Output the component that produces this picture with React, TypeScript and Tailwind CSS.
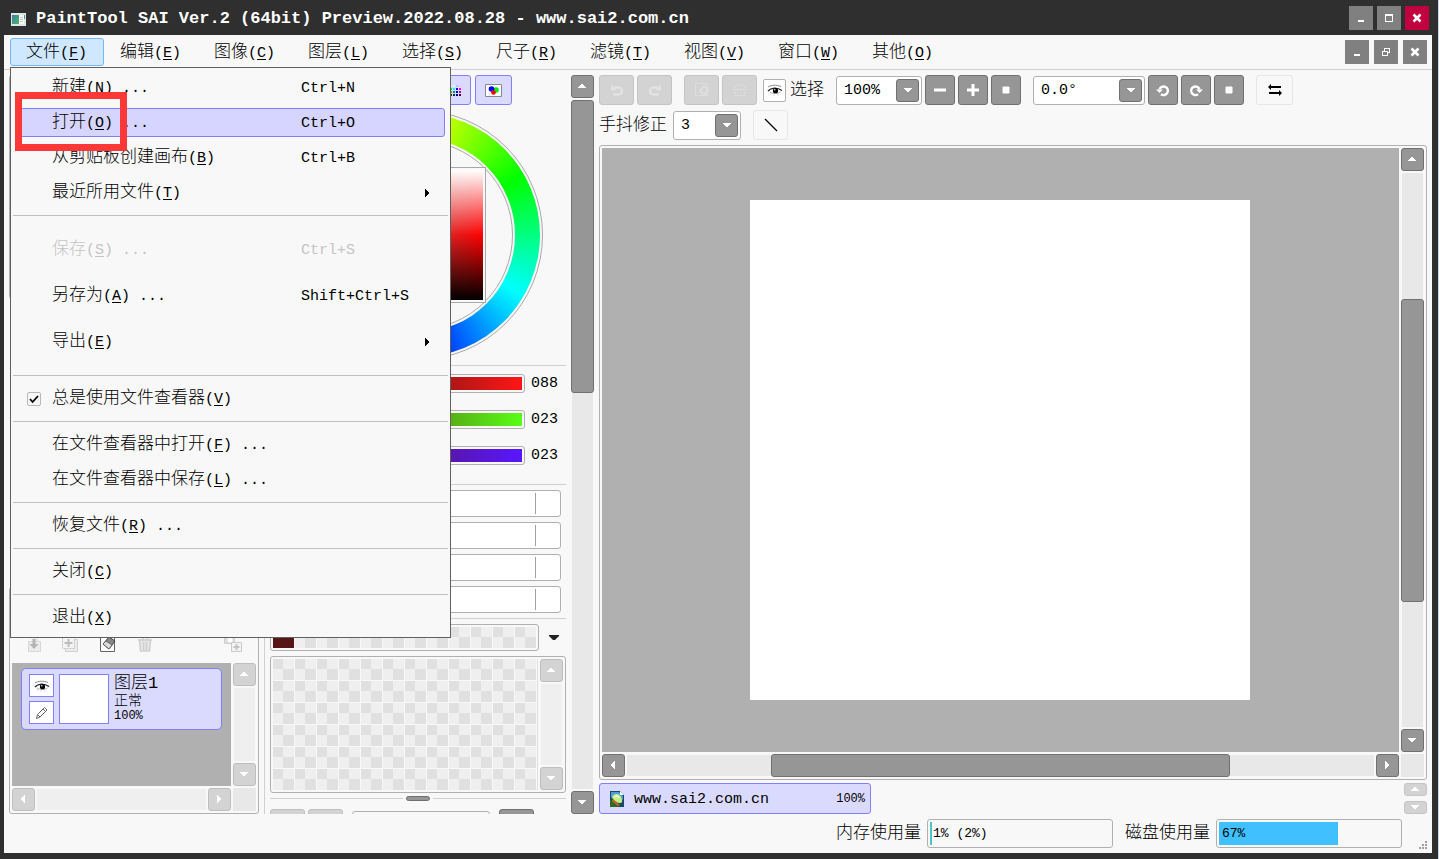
import { clsx } from "clsx";
import type { ReactNode } from "react";

type Dir = "up" | "down" | "left" | "right";

const cjk = "font-['Liberation_Mono','Noto_Sans_CJK_SC',monospace] font-light";

const menus = [
  ["文件", "F"],
  ["编辑", "E"],
  ["图像", "C"],
  ["图层", "L"],
  ["选择", "S"],
  ["尺子", "R"],
  ["滤镜", "T"],
  ["视图", "V"],
  ["窗口", "W"],
  ["其他", "O"],
];

const channels = [
  { name: "R", value: "088", bar: "bg-linear-to-r/srgb from-[#001616] to-[#ff1616]" },
  { name: "G", value: "023", bar: "bg-linear-to-r/srgb from-[#580016] to-[#58ff16]" },
  { name: "B", value: "023", bar: "bg-linear-to-r/srgb from-[#581600] to-[#5816ff]" },
];

const arrowPaths: Record<Dir, string> = {
  up: "M0 6h8v-1h-1v-1h-1v-1h-1v-1h-2v1h-1v1h-1v1h-1z",
  down: "M0 2h8v1h-1v1h-1v1h-1v1h-2v-1h-1v-1h-1v-1h-1z",
  left: "M6 0v8h-1v-1h-1v-1h-1v-1h-1v-2h1v-1h1v-1h1v-1z",
  right: "M2 0v8h1v-1h1v-1h1v-1h1v-2h-1v-1h-1v-1h-1v-1z",
};

function Arrow({ dir, className = "text-white" }: { dir: Dir; className?: string }) {
  return (
    <svg viewBox="0 0 8 8" className={clsx("size-2", className)} fill="currentColor" shapeRendering="crispEdges">
      <path d={arrowPaths[dir]} />
    </svg>
  );
}

// Accelerator label such as 文件(F)
function Label({ text, accel, more }: { text: string; accel?: string; more?: boolean }) {
  return (
    <span className="whitespace-pre text-[17px] leading-5">
      {text}
      {accel && (
        <span className="text-[15px]">
          (<u className="underline-offset-2">{accel}</u>){more && " ..."}
        </span>
      )}
    </span>
  );
}

function ScrollButton({ dir, disabled }: { dir: Dir; disabled?: boolean }) {
  return (
    <button
      aria-label={`Scroll ${dir}`}
      disabled={disabled}
      className={clsx(
        "flex size-[23px] shrink-0 items-center justify-center rounded-[3px] border pr-px pb-px",
        disabled ? "border-[#bebebe] bg-[#d3d3d3]" : "border-[#707070] bg-[#969696]",
      )}
    >
      <Arrow dir={dir} />
    </button>
  );
}

function ScrollBar({
  vertical,
  disabled,
  children,
}: {
  vertical?: boolean;
  disabled?: boolean;
  children?: ReactNode;
}) {
  return (
    <div className={clsx("flex min-h-0 min-w-0 gap-0.5", vertical ? "flex-col items-center" : "items-center")}>
      <ScrollButton dir={vertical ? "up" : "left"} disabled={disabled} />
      <div
        className={clsx(
          "flex min-h-0 flex-1",
          vertical ? "w-[21px] flex-col items-center" : "h-[21px] items-center",
          disabled ? "bg-[#efefef]" : "bg-[#e8e8e8]",
        )}
      >
        {children}
      </div>
      <ScrollButton dir={vertical ? "down" : "right"} disabled={disabled} />
    </div>
  );
}

const thumb = "rounded-[3px] border border-[#707070] bg-[#969696]";

function WinButton({ label, danger, children }: { label: string; danger?: boolean; children: ReactNode }) {
  return (
    <button
      aria-label={label}
      className={clsx("flex size-6 items-center justify-center", danger ? "bg-[#c0003f]" : "bg-[#808080]")}
    >
      <svg viewBox="0 0 24 24" className="size-6" fill="none" stroke="#fff" shapeRendering="crispEdges">
        {children}
      </svg>
    </button>
  );
}

const minimise = <path d="M9 15h6" strokeWidth="2" />;
const close = <path d="M8.5 8.5l7 7M15.5 8.5l-7 7" strokeWidth="2.6" shapeRendering="auto" />;

function TitleBar() {
  return (
    <header className="flex h-[35px] shrink-0 items-center pr-[3px] pl-[7px]">
      <svg viewBox="0 0 15 13" className="mt-1 h-[13px] w-[15px]">
        <defs>
          <linearGradient id="app" x1="0" y1="0" x2="1" y2="1">
            <stop offset="0" stopColor="#3a7fa8" />
            <stop offset="1" stopColor="#4cb860" />
          </linearGradient>
        </defs>
        <path d="M0 0h15v13H0z" fill="#dfe5e6" />
        <path d="M1 2h7v9H1z" fill="url(#app)" />
        <path d="M8 2h5v9H8z" fill="#f8f8f8" />
        <path d="M9 4.5h3M9 6.5h3M9 8.5h3" stroke="#c6c6c6" />
        <path d="M13 2h1v4h-1z" fill="#3a9a90" />
      </svg>
      <h1 className="ml-2.5 flex-1 truncate pt-0.5 text-[17px] leading-5 font-bold text-white">
        PaintTool SAI Ver.2 (64bit) Preview.2022.08.28 - www.sai2.com.cn
      </h1>
      <div className="flex gap-1">
        <WinButton label="Minimise">{minimise}</WinButton>
        <WinButton label="Maximise">
          <path d="M8.5 8.5h7v7h-7z" />
          <path d="M8 9h8" strokeWidth="2" />
        </WinButton>
        <WinButton label="Close" danger>
          {close}
        </WinButton>
      </div>
    </header>
  );
}

interface ItemProps {
  text: string;
  accel: string;
  more?: boolean;
  keys?: string;
  sub?: boolean;
  tall?: boolean;
  active?: boolean;
  disabled?: boolean;
}

function MenuItem({ text, accel, more, keys, sub, tall, active, disabled }: ItemProps) {
  return (
    <button
      role="menuitem"
      disabled={disabled}
      className={clsx(
        "mx-[3px] flex items-center rounded-[3px] border pr-[13px] pl-[35px] text-left",
        tall ? "my-1 h-[38px]" : "my-[3px] h-[29px]",
        active ? "border-[#8080f8] bg-[#d5d5ff]" : "border-transparent",
        disabled && "text-[#c4c4c4]",
      )}
    >
      <span className="w-[249px]">
        <Label text={text} accel={accel} more={more} />
      </span>
      <span className="flex-1 pt-0.5 text-[15px] leading-5">{keys}</span>
      {sub && <Arrow dir="right" className="text-black" />}
    </button>
  );
}

function Separator() {
  return <div role="separator" className="my-[5px] h-px bg-[#c0c0c0]" />;
}

function FileMenu() {
  return (
    <div
      role="menu"
      className="absolute top-8 left-1.5 z-10 flex w-[441px] flex-col border border-[#606060] bg-[#f8f8f8] p-0.5"
    >
      <MenuItem text="新建" accel="N" more keys="Ctrl+N" />
      <MenuItem text="打开" accel="O" more keys="Ctrl+O" active />
      <MenuItem text="从剪贴板创建画布" accel="B" keys="Ctrl+B" />
      <MenuItem text="最近所用文件" accel="T" sub />
      <Separator />
      <div className="flex flex-col pt-1.5 pb-[5px]">
        <MenuItem text="保存" accel="S" more keys="Ctrl+S" tall disabled />
        <MenuItem text="另存为" accel="A" more keys="Shift+Ctrl+S" tall />
        <MenuItem text="导出" accel="E" tall sub />
      </div>
      <Separator />
      <label className="flex h-[35px] items-center pl-3.5">
        <span className="grid size-3.5 place-items-center">
          <input
            type="checkbox"
            defaultChecked
            className="col-start-1 row-start-1 size-3.5 appearance-none rounded-xs border border-[#b8b8b8] bg-[#f8f8f8]"
          />
          <svg viewBox="0 0 10 10" className="col-start-1 row-start-1 size-2.5" fill="none" stroke="#000" strokeWidth="1.8">
            <path d="M1 5l2.6 3L9 2" />
          </svg>
        </span>
        <span className="ml-[11px]">
          <Label text="总是使用文件查看器" accel="V" />
        </span>
      </label>
      <Separator />
      <MenuItem text="在文件查看器中打开" accel="F" more />
      <MenuItem text="在文件查看器中保存" accel="L" more />
      <Separator />
      <MenuItem text="恢复文件" accel="R" more />
      <Separator />
      <MenuItem text="关闭" accel="C" />
      <Separator />
      <MenuItem text="退出" accel="X" />
      <div className="absolute top-6 left-1 h-[59px] w-28 border-7 border-[#fb3838]" />
    </div>
  );
}

function MenuBar() {
  return (
    <nav className="relative flex h-[35px] shrink-0 items-center justify-between border-b border-[#d0d0d0] pr-[5px] pl-1.5">
      <div className="flex">
        {menus.map(([text, accel], i) => (
          <button
            key={accel + text}
            className={clsx(
              "h-7 w-[94px] rounded-[3px] border pt-0.5 pl-[15px] text-left",
              i === 0 ? "border-[#70b8f8] bg-[#d0e8ff]" : "border-transparent",
            )}
          >
            <Label text={text} accel={accel} />
          </button>
        ))}
      </div>
      <div className="flex gap-[5px]">
        <WinButton label="Minimise document">{minimise}</WinButton>
        <WinButton label="Restore document">
          <path d="M8.5 11.5h5v4h-5zM10.5 11v-2.5h5v4h-2" />
          <path d="M8 11.5h6M10 8.5h6" strokeWidth="1.5" />
        </WinButton>
        <WinButton label="Close document">{close}</WinButton>
      </div>
      <FileMenu />
    </nav>
  );
}

function Eye() {
  return (
    <svg viewBox="0 0 16 14" className="h-3.5 w-4" fill="none" stroke="#444">
      <path d="M1 4C4 2 9 1.500 14 3.500" stroke="#888" />
      <path d="M1 8C4 4.500 10 4 15 7.500" strokeWidth="1.300" stroke="#222" />
      <path d="M3 9C6 11 11 11 13.500 8.800" stroke="#aaa" />
      <circle cx="8.500" cy="7.700" r="2.600" fill="#000" stroke="none" />
      <path d="M4 10.500l-.8 1.200M7 11.500v1.300M10.500 11.500l.5 1.300" strokeWidth=".8" stroke="#bbb" />
      <circle cx="7.800" cy="6.800" r=".7" fill="#fff" stroke="none" />
    </svg>
  );
}

function LayerIcon({ label, className, children }: { label: string; className?: string; children: ReactNode }) {
  return (
    <button aria-label={label} className={className}>
      <svg viewBox="0 0 18 18" className="size-[18px]" fill="none">
        {children}
      </svg>
    </button>
  );
}

function LayerPanel() {
  return (
    <aside className="flex w-[250px] shrink-0 flex-col justify-between">
      <div className="h-56 rounded-[3px] border border-[#b0b0b0]" />
      <section className="flex h-[227px] flex-col justify-end rounded-[3px] border border-[#b0b0b0] p-0.5">
        <div className="mb-2.5 flex items-center pr-3.5 pl-3 text-[#c8c8c8]">
          <LayerIcon label="Merge down">
            <path d="M4.500 6.500h12v10h-12zM2 1h11v6" fill="#ececec" stroke="#d8d8d8" />
            <path d="M10 4v5" stroke="#b4b4b4" strokeWidth="3" />
            <path d="M5.500 9h9L10 14z" fill="#b4b4b4" />
          </LayerIcon>
          <LayerIcon label="New group" className="ml-[18px]">
            <path d="M5.500 4.500h12v12h-12z" stroke="#d0d0d0" fill="#ececec" />
            <path d="M2.500 1.500h12v12h-12z" stroke="#c4c4c4" fill="#f4f4f4" strokeDasharray="2 1" />
            <path d="M8.500 4v8M4.500 8h8" stroke="#bdbdbd" strokeWidth="2" />
          </LayerIcon>
          <LayerIcon label="Clear layer" className="ml-5">
            <path d="M2.500 2.500h14v14h-14z" fill="#fff" stroke="#666" />
            <path d="M5 9l6-7 6 4-6 8z" fill="#888" stroke="#444" />
            <path d="M5 9l3-3 6 4-3 4z" fill="#ddd" stroke="#666" />
          </LayerIcon>
          <LayerIcon label="Delete layer" className="ml-5">
            <path d="M2 5h14M7 4V2h4v2" stroke="#d4d4d4" strokeWidth="2" />
            <path d="M3.500 6l1 10h9l1-10M7.500 7v8M10.500 7v8" stroke="#cfcfcf" strokeWidth="1.500" fill="#e6e6e6" />
          </LayerIcon>
          <LayerIcon label="Apply mask" className="ml-auto">
            <path d="M.5 1.500h10v7H.5z" stroke="#d0d0d0" fill="#dcdcdc" />
            <circle cx="6" cy="5" r="2.500" fill="#fff" />
            <path d="M7.500 7.500h10v9h-10z" fill="#f4f4f4" stroke="#cacaca" />
            <path d="M12.500 9v6M9.500 12h6" stroke="#c4c4c4" strokeWidth="2" />
          </LayerIcon>
        </div>
        <div className="grid grid-cols-[1fr_23px] grid-rows-[123px_23px] gap-0.5">
          <div className="bg-[#b0b0b0] px-[9px] pt-[5px]">
            <div className="flex h-[62px] gap-[5px] rounded-[5px] border border-[#8080ff] bg-[#dadaff] py-[5px] pl-[7px]">
              <div className="flex flex-col justify-between">
                <button aria-label="Visible" className="flex h-[23px] w-[25px] items-center justify-center border border-[#8080ff] bg-white">
                  <Eye />
                </button>
                <button aria-label="Edit" className="flex h-[23px] w-[25px] items-center justify-center border border-[#8080ff] bg-white">
                  <svg viewBox="0 0 14 14" className="size-3.5" fill="none" stroke="#666">
                    <path d="M1.500 12.500l1-4 7-7 2.500 2.500-7 7zM2.500 8.500l2.500 2.500M8 3l2.500 2.500" />
                  </svg>
                </button>
              </div>
              <div className="size-[50px] border border-[#8080ff] bg-white" />
              <div className="flex flex-col pt-px">
                <span className="text-[17px] leading-[18px]">图层1</span>
                <span className="text-sm leading-[17px]">正常</span>
                <span className="text-xs leading-[13px]">100%</span>
              </div>
            </div>
          </div>
          <ScrollBar vertical disabled />
          <ScrollBar disabled />
          <div className="bg-[#e8e8e8]" />
        </div>
      </section>
    </aside>
  );
}

function ColorWheel() {
  return (
    <div className="mx-auto mt-[5px] size-[250px] shrink-0 rounded-full border border-[#a8a8a8] p-0.5">
      <div className="flex size-full items-center justify-center rounded-full bg-[conic-gradient(#ff0,#0f0,#0ff,#00f,#f0f,#f00,#ff0)]">
        <div className="flex size-[194px] items-center justify-center rounded-full bg-[#f8f8f8]">
          <div className="flex size-[190px] items-center justify-center rounded-full border border-[#a8a8a8]">
            <div className="size-[136px] shrink-0 border border-[#a8a8a8] bg-[#f8f8f8] p-0.5">
              <div className="size-full bg-linear-to-r/srgb from-[#808080] to-[#f00]">
                <div className="size-full bg-[linear-gradient(#fff,#fff0_50%,#0000_50%,#000)]" />
              </div>
            </div>
          </div>
        </div>
      </div>
    </div>
  );
}

function Cells({ count, first }: { count: number; first?: string }) {
  return (
    <div className="grid grid-cols-[repeat(12,21px)] gap-px">
      {Array.from({ length: count }, (_, i) => (
        <div
          key={i}
          className={clsx(
            "size-[21px]",
            i === 0 && first
              ? first
              : "bg-[conic-gradient(at_10px_10px,#efefef_25%,#e0e0e0_0_50%,#efefef_0_75%,#e0e0e0_0)]",
          )}
        />
      ))}
    </div>
  );
}

function Rule() {
  return <div className="h-px shrink-0 bg-[#d0d0d0]" />;
}

const swatchRows = [
  ["#f88", "#fb8", "#cfc", "#cff", "#bbf", "#fbe"],
  ["#f00", "#ff0", "#0e0", "#0ff", "#00f", "#f0f"],
  ["#900", "#990", "#4a0", "#088", "#00c", "#a0a"],
  ["#400", "#440", "#040", "#033", "#006", "#404"],
];

function ColorPanel() {
  const modes = ["Wheel", "RGB", "HSV", "Mixer"];
  const modeClass = "flex h-[30px] w-[37px] items-center justify-center rounded-[3px] border border-[#8080ff] bg-[#dadaff]";
  return (
    <section className="flex w-[296px] shrink-0 flex-col overflow-hidden">
      <div className="flex gap-1">
        {modes.map((m) => (
          <button key={m} aria-label={m} className={modeClass} />
        ))}
        <button aria-label="Swatches" className={modeClass}>
          <svg viewBox="0 0 17 11" className="h-[11px] w-[17px]" shapeRendering="crispEdges">
            {swatchRows.map((row, y) =>
              row.map((c, x) => <path key={c} d={`M${x * 3} ${y * 3}h2v2h-2z`} fill={c} />),
            )}
          </svg>
        </button>
        <button aria-label="Scratch pad" className={modeClass}>
          <svg viewBox="0 0 17 13" className="h-[13px] w-[17px]">
            <path d="M.5.5h16v12h-16z" fill="#fff" stroke="#888" />
            <circle cx="11" cy="6" r="2.800" fill="#0e0" />
            <circle cx="6.500" cy="5" r="2.800" fill="#00f" />
            <circle cx="8.500" cy="8.500" r="2.300" fill="#f00" />
          </svg>
        </button>
      </div>
      <ColorWheel />
      <div className="mt-[5px]">
        <Rule />
      </div>
      <div className="flex shrink-0 flex-col gap-4 pt-[7px] pb-[19px]">
        {channels.map((c) => (
          <label key={c.name} className="flex h-5 items-start text-[15px] leading-5">
            <span className="w-5">{c.name}</span>
            <span className="mt-px flex h-[19px] flex-1 rounded-[3px] border border-[#b0b0b0] p-0.5">
              <input
                type="range"
                min={0}
                max={255}
                defaultValue={Number(c.value)}
                className={clsx("h-full w-full appearance-none [&::-webkit-slider-thumb]:size-0 [&::-webkit-slider-thumb]:appearance-none", c.bar)}
              />
            </span>
            <span className="ml-1.5 w-[35px] pt-px">{c.value}</span>
          </label>
        ))}
      </div>
      <Rule />
      <div className="flex shrink-0 flex-col gap-[5px] py-[5px] pr-[5px]">
        {[0, 1, 2, 3].map((i) => (
          <div key={i} className="flex h-[27px] justify-end rounded-[3px] border border-[#b0b0b0] bg-white py-0.5">
            <div className="w-[25px] border-l border-[#a0a0a0]" />
          </div>
        ))}
      </div>
      <Rule />
      <div className="mt-[5px] flex shrink-0 items-center">
        <div className="flex h-[27px] w-[269px] rounded-[3px] border border-[#b0b0b0] p-0.5">
          <Cells count={12} first="bg-[#561616]" />
        </div>
        <button aria-label="Swatch menu" className="ml-2.5">
          <svg viewBox="0 0 10 6" className="h-1.5 w-2.5" fill="#222">
            <path d="M0 0h10v1L6 5H4L0 1z" />
          </svg>
        </button>
      </div>
      <div className="mt-[5px] flex h-[137px] shrink-0 rounded-[3px] border border-[#b0b0b0] p-0.5">
        <Cells count={72} />
        <div className="mr-0.5 ml-px w-px bg-[#e0e0e0]" />
        <ScrollBar vertical disabled />
      </div>
      <div className="mt-[3px] flex h-[5px] shrink-0 items-center gap-[3px]">
        <div className="h-px flex-1 bg-[#d0d0d0]" />
        <div className="h-[5px] w-6 rounded-full border border-[#707070] bg-[#969696]" />
        <div className="h-px flex-1 bg-[#d0d0d0]" />
      </div>
      <div className="mt-2 flex h-[30px] shrink-0 gap-[3px]">
        <div className="w-[35px] rounded-[3px] border border-[#bebebe] bg-[#d3d3d3]" />
        <div className="w-[35px] rounded-[3px] border border-[#bebebe] bg-[#d3d3d3]" />
        <div className="mt-0.5 ml-1.5 w-[138px] rounded-[3px] border border-[#b0b0b0]" />
        <div className={clsx("ml-1.5 w-[35px]", thumb)} />
      </div>
    </section>
  );
}

function Combo({ label, value, className }: { label: string; value: string; className: string }) {
  return (
    <div className={clsx("grid h-[29px] items-center rounded-[3px] border border-[#b0b0b0] bg-white", className)}>
      <select
        aria-label={label}
        defaultValue={value}
        className="col-start-1 row-start-1 w-full appearance-none pt-0.5 pl-[7px] text-[15px] leading-5"
      >
        <option>{value}</option>
      </select>
      <span className={clsx("pointer-events-none col-start-1 row-start-1 mr-0.5 flex size-[23px] items-center justify-center justify-self-end", thumb)}>
        <Arrow dir="down" />
      </span>
    </div>
  );
}

function ToolButton({ label, disabled, children }: { label: string; disabled?: boolean; children: ReactNode }) {
  return (
    <button
      aria-label={label}
      disabled={disabled}
      className={clsx(
        "flex h-[30px] items-center justify-center rounded-[3px] border",
        disabled ? "w-[35px] border-[#c4c4c4] bg-[#d3d3d3]" : "w-[30px] border-[#707070] bg-[#969696]",
      )}
    >
      <svg viewBox="0 0 14 14" className="size-3.5" fill="none" stroke={disabled ? "#e2e2e2" : "#fff"} strokeWidth="2">
        {children}
      </svg>
    </button>
  );
}

function Toolbar() {
  return (
    <>
      <div className="flex h-[30px] shrink-0 items-center">
        <div className="flex gap-[3px]">
          <ToolButton label="Undo" disabled>
            <path d="M4 4.500h4.500a3.500 3.500 0 0 1 0 7H3" strokeWidth="2.400" />
            <path d="M1 1.500v6h6z" fill="#e2e2e2" stroke="none" />
          </ToolButton>
          <ToolButton label="Redo" disabled>
            <path d="M10 4.500H5.500a3.500 3.500 0 0 0 0 7H11" strokeWidth="2.400" />
            <path d="M13 1.500v6H7z" fill="#e2e2e2" stroke="none" />
          </ToolButton>
        </div>
        <div className="ml-3 flex gap-[3px]">
          <ToolButton label="Deselect" disabled>
            <path d="M.5.5h12v12H.5z" strokeWidth="1" strokeDasharray="2 1" />
            <path d="M5 8l4-5 4 4-4 5z" strokeWidth="1.500" />
          </ToolButton>
          <ToolButton label="Invert selection" disabled>
            <path d="M.5 6.500h13M2 5l2-3h6l2 3M2 8.500v4h10v-4" strokeWidth="1" strokeDasharray="2 1" />
          </ToolButton>
        </div>
        <button aria-label="Show selection" className="ml-1.5 flex size-[23px] items-center justify-center rounded-xs border border-[#b0b0b0] bg-white">
          <Eye />
        </button>
        <span className="ml-1 pt-0.5 text-[17px] leading-5">选择</span>
        <Combo label="Zoom" value="100%" className="ml-3 w-[86px]" />
        <div className="ml-[3px] flex gap-[3px]">
          <ToolButton label="Zoom out">
            <path d="M1 7h12" strokeWidth="3" />
          </ToolButton>
          <ToolButton label="Zoom in">
            <path d="M1 7h12M7 1v12" strokeWidth="3" />
          </ToolButton>
          <ToolButton label="Reset zoom">
            <path d="M4 4h6v6H4z" fill="#fff" strokeWidth="1" />
          </ToolButton>
        </div>
        <Combo label="Angle" value="0.0°" className="ml-3 w-28" />
        <div className="ml-[3px] flex gap-[3px]">
          <ToolButton label="Rotate left">
            <path d="M3.500 6.500A4.300 4.300 0 1 1 5 11.200" strokeWidth="2.400" />
            <path d="M0 6.500h7L3.500 10z" fill="#fff" stroke="none" />
          </ToolButton>
          <ToolButton label="Rotate right">
            <path d="M10.500 6.500A4.300 4.300 0 1 0 9 11.200" strokeWidth="2.400" />
            <path d="M14 6.500H7L10.500 10z" fill="#fff" stroke="none" />
          </ToolButton>
          <ToolButton label="Reset angle">
            <path d="M4 4h6v6H4z" fill="#fff" strokeWidth="1" />
          </ToolButton>
        </div>
        <button aria-label="Flip" className="ml-3 flex h-[30px] w-[37px] items-center justify-center rounded-[3px] border border-[#e6e6e6]">
          <svg viewBox="0 0 16 14" className="h-3.5 w-4" fill="none" stroke="#000" strokeWidth="2">
            <path d="M3 4h11M2 10h11" />
            <path d="M4 1v6L1 4zM12 7v6l3-3z" fill="#000" stroke="none" />
          </svg>
        </button>
      </div>
      <div className="mt-[5px] flex h-[30px] shrink-0 items-center">
        <span className="pt-0.5 text-[17px] leading-5">手抖修正</span>
        <Combo label="手抖修正" value="3" className="ml-1.5 w-[68px]" />
        <button aria-label="Line" className="ml-3 flex h-[30px] w-[35px] items-center justify-center rounded-[3px] border border-[#e6e6e6]">
          <svg viewBox="0 0 14 14" className="size-3.5" stroke="#000" strokeWidth="1.300">
            <path d="M1 1l12 12" />
          </svg>
        </button>
      </div>
    </>
  );
}

function Workspace() {
  return (
    <main className="flex min-w-0 flex-1 flex-col">
      <Toolbar />
      <div className="mt-[5px] grid min-h-0 flex-1 grid-cols-[1fr_23px] grid-rows-[1fr_23px] gap-0.5 rounded-[3px] border border-[#b0b0b0] p-0.5">
        <div className="flex min-h-0 items-center justify-center overflow-hidden bg-[#b0b0b0] pr-px">
          <div className="size-[500px] shrink-0 bg-white" />
        </div>
        <ScrollBar vertical>
          <div className="flex-126" />
          <div className={clsx("w-[23px] flex-303", thumb)} />
          <div className="flex-125" />
        </ScrollBar>
        <ScrollBar>
          <div className="flex-144" />
          <div className={clsx("h-[23px] flex-459", thumb)} />
          <div className="flex-144" />
        </ScrollBar>
        <div className="bg-[#e8e8e8]" />
      </div>
      <div className="mt-[3px] flex h-[31px] shrink-0 justify-between">
        <button className="flex w-[272px] items-center rounded-[3px] border border-[#8080ff] bg-[#dadaff] pr-[5px] pl-2.5">
          <svg viewBox="0 0 14 16" className="h-4 w-3.5">
            <path d="M0 0h10l4 4v12H0z" fill="#164a68" />
            <path d="M1 1h8l4 4v4L5 4 1 7z" fill="#4aa0e0" />
            <path d="M2 6c2-4 7-4 9 0s1 6-1 6-7-2-8-6z" fill="#c8f080" />
            <path d="M4 6c2-3 5-2 6 1z" fill="#f4ffd8" />
            <path d="M0 9c4 0 6 3 9 5l-1 2H0z" fill="#2c6a28" />
            <path d="M3 8l7 6-2 1-6-5z" fill="#c06a20" />
            <path d="M10 0l4 4h-4z" fill="#fff" />
          </svg>
          <span className="ml-2.5 flex-1 pt-0.5 text-left text-[15px] leading-5">www.sai2.com.cn</span>
          <span className="text-xs">100%</span>
        </button>
        <div className="flex flex-col items-center justify-between">
          {(["up", "down"] as const).map((d) => (
            <button key={d} aria-label={`Tabs ${d}`} disabled className="flex h-[13px] w-[23px] items-center justify-center rounded-[3px] border border-[#c4c4c4] bg-[#d3d3d3] pr-px pb-px">
              <Arrow dir={d} />
            </button>
          ))}
        </div>
      </div>
    </main>
  );
}

function Usage({ label, value, text, bar }: { label: string; value: number; text: string; bar: string }) {
  return (
    <div className="flex items-center gap-1.5">
      <span className="text-[17px] leading-5">{label}</span>
      <div
        role="progressbar"
        aria-label={label}
        aria-valuenow={value}
        className="grid h-[29px] w-[186px] items-center rounded-[3px] border border-[#b0b0b0] p-0.5"
      >
        <div className={clsx("col-start-1 row-start-1 h-full", bar)} style={{ width: `${value}%` }} />
        <span className="col-start-1 row-start-1 pl-[3px] text-[13px] leading-4">{text}</span>
      </div>
    </div>
  );
}

function StatusBar() {
  return (
    <footer className="flex h-[39px] shrink-0 items-center justify-end gap-3 pr-[5px]">
      <Usage label="内存使用量" value={1} text="1% (2%)" bar="border-r border-[#60b0f0] bg-[#40d8a0]" />
      <Usage label="磁盘使用量" value={66} text="67%" bar="bg-[#40c0ff]" />
      <svg viewBox="0 0 8 8" className="mb-1 ml-[5px] size-2 self-end" fill="#a0a0a0" shapeRendering="crispEdges">
        <path d="M6 0h2v2H6zM6 3h2v2H6zM6 6h2v2H6zM3 3h2v2H3zM3 6h2v2H3zM0 6h2v2H0z" />
      </svg>
    </footer>
  );
}

export default function App() {
  return (
    <div className={clsx("flex h-screen flex-col overflow-hidden border-r border-[#c8d4ec] bg-[#2f2f2f] pr-1.5 pb-1.5 pl-1 text-black", cjk)}>
      <TitleBar />
      <div className="flex min-h-0 flex-1 flex-col bg-[#f8f8f8]">
        <MenuBar />
        <div className="flex min-h-0 flex-1 px-[5px] pt-[5px]">
          <LayerPanel />
          <div className="mx-[5px] w-px bg-[#d0d0d0]" />
          <ColorPanel />
          <div className="mx-[5px] flex">
            <ScrollBar vertical>
              <div className={clsx("w-[23px] flex-291", thumb)} />
              <div className="flex-396" />
            </ScrollBar>
          </div>
          <Workspace />
        </div>
        <StatusBar />
      </div>
    </div>
  );
}
